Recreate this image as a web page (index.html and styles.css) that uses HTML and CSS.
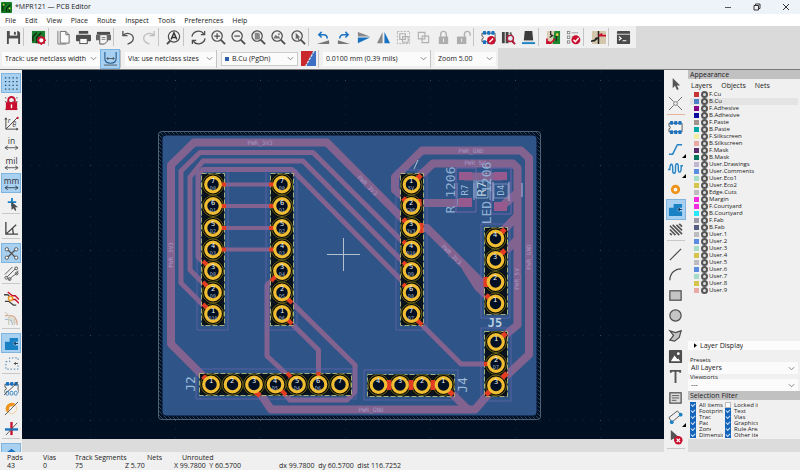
FILE: index.html
```html
<!DOCTYPE html>
<html lang="en">
<head>
<meta charset="utf-8">
<title>*MPR121 — PCB Editor</title>
<link rel="stylesheet" href="styles.css">
</head>
<body>
<svg class="defs" aria-hidden="true">
  <defs>
    <symbol id="i-lens" viewBox="0 0 16 16"><circle cx="6.5" cy="6.5" r="5.5" fill="none" stroke="#4d4d4d" stroke-width="1.3"/><path d="M10.5 10.5l4.5 4.5" stroke="#4d4d4d" stroke-width="2"/></symbol>
    <symbol id="i-rats" viewBox="0 0 16 16"><g fill="none" stroke="#545454"><path d="M4 4l8 8M12 4l-8 8" stroke-width="1.4"/><g fill="#eef5fb"><circle cx="3" cy="3.500" r="1.800"/><circle cx="13" cy="3.500" r="1.800"/><circle cx="3" cy="12.500" r="1.800"/><circle cx="13" cy="12.500" r="1.800"/></g></g></symbol>
    <symbol id="i-foot" viewBox="0 0 16 16"><path d="M1 3.500h14v9H1v-3a1.500 1.500 0 0 0 0-3z" fill="#f4f4f4" stroke="#545454"/><g fill="#1a73c1"><rect x="2" y="1" width="3.500" height="4" rx="1"/><rect x="6.500" y="1" width="3.500" height="4" rx="1"/><rect x="11" y="1" width="3.500" height="4" rx="1"/><rect x="2" y="11" width="3.500" height="4" rx="1"/><rect x="6.500" y="11" width="3.500" height="4" rx="1"/><rect x="11" y="11" width="3.500" height="4" rx="1"/></g></symbol>
    <symbol id="i-zone" viewBox="0 0 16 16"><path d="M1 6h5V2h9v4h-3a2 2 0 0 0 0 4h3v5H1z" fill="#1a81c4"/><path d="M15 8h-4M12.500 6.500L11 8l1.500 1.500" fill="none" stroke="#123d66" stroke-width="1.3"/></symbol>
    <symbol id="chev" viewBox="0 0 8 8"><path d="M1 2.500l3 3 3-3" fill="none" stroke="#777"/></symbol>
    <g id="ring"><circle r="7.300" fill="#000f24" stroke="#f0bd32" stroke-width="3.200"/></g>
    <g id="land"><rect x="-11" y="-11" width="22" height="22" rx="9" fill="#05080a"/><circle r="10.500" fill="none" stroke="#968b22" stroke-width=".7"/></g>
    <pattern id="grid" x="90" y="80" width="85" height="85" patternUnits="userSpaceOnUse">
      <path d="M0 .5h85" stroke="#14283d" stroke-dasharray="1 7.500"/><path d="M.5 0v85" stroke="#14283d" stroke-dasharray="1 7.500"/><rect width="1" height="1" fill="#3a4a5a"/>
    </pattern>
    <pattern id="hatch" width="4" height="4" patternUnits="userSpaceOnUse"><path d="M0 0l4 4M-1 3l2 2M3-1l2 2" stroke="#3a546c" stroke-width=".8"/></pattern>
  </defs>
</svg>

<header class="title">
  <svg class="logo" viewBox="0 0 12 12"><rect width="12" height="12" rx="1" fill="#137a21"/><path d="M2 10V5l3-3M6 11V7l4-4M9 11V8" fill="none" stroke="#0a2c0e" stroke-width="1.4"/><circle cx="3" cy="3" r="1" fill="#cfd45a"/><circle cx="9.500" cy="7" r="1" fill="#cfd45a"/></svg>
  <h1>*MPR121 — PCB Editor</h1>
  <div class="winbtns">
    <button aria-label="Minimize"><svg viewBox="0 0 8 8"><path d="M1 4.500h6" stroke="#555"/></svg></button>
    <button aria-label="Restore"><svg viewBox="0 0 8 8"><path d="M1 2.500h4.500V7H1zM2.500 2.500V1H7v4.500H5.500" fill="none" stroke="#333"/></svg></button>
    <button aria-label="Close"><svg viewBox="0 0 8 8"><path d="M1 1l6 6M7 1L1 7" stroke="#333"/></svg></button>
  </div>
</header>

<nav class="menu">
  <a href="#">File</a><a href="#">Edit</a><a href="#">View</a><a href="#">Place</a><a href="#">Route</a><a href="#">Inspect</a><a href="#">Tools</a><a href="#">Preferences</a><a href="#">Help</a>
</nav>

<div class="bars">
<div class="toolbar">
  <button aria-label="Save"><svg viewBox="0 0 16 16"><path d="M1 1h12l2 2v12H1z" fill="#4d4d4d"/><rect x="4" y="1" width="8" height="5" fill="#f0f0f0"/><rect x="8.500" y="2" width="2" height="3" fill="#4d4d4d"/><rect x="3" y="9" width="10" height="6" fill="#f0f0f0"/></svg></button><i></i>
  <button aria-label="Board setup"><svg viewBox="0 0 16 16"><rect x="1" y="1" width="14" height="13" fill="#1d7f30"/><path d="M2 12V7l4-4M6 14V8l5-5" fill="none" stroke="#0a3010" stroke-width="1.500"/><circle cx="11" cy="11" r="3.200" fill="#fff" stroke="#c8102e" stroke-width="1.800"/><path d="M11 6v2M11 14v2M6 11h2M14 11h2M7.500 7.500L9 9M13 13l1.500 1.500M14.500 7.500L13 9M9 13l-1.500 1.500" stroke="#c8102e" stroke-width="1.500"/></svg></button><i></i>
  <button aria-label="Page settings"><svg viewBox="0 0 16 16"><path d="M2 1v14h9" fill="none" stroke="#777"/><path d="M4.500 1.500h6L14 5v9H4.500zM10.500 1.500V5H14" fill="#fafafa" stroke="#666"/></svg></button>
  <button aria-label="Print"><svg viewBox="0 0 16 16"><rect x="3" y="1" width="10" height="3" fill="#4d4d4d"/><rect y="5" width="16" height="7" rx="1" fill="#4d4d4d"/><rect x="4" y="9" width="8" height="5.500" fill="#f8f8f8" stroke="#4d4d4d"/></svg></button>
  <button aria-label="Plot"><svg viewBox="0 0 16 16"><path d="M1 2h14v3H1z" fill="#4d4d4d"/><path d="M0 5h4v6H0zM12 5h4v6h-4z" fill="#666"/><path d="M4 5h8v7l-3 3H4z" fill="#f5f5f5" stroke="#4d4d4d"/><path d="M6 8h4M6 10h4" stroke="#777"/></svg></button><i></i>
  <button aria-label="Undo"><svg viewBox="0 0 16 16"><path d="M2 1v5h5M2 6c5-5 12-1 11 4-.5 3-3 4-6 5" fill="none" stroke="#545454" stroke-width="1.400"/></svg></button>
  <button aria-label="Redo"><svg viewBox="0 0 16 16"><path d="M14 1v5H9M14 6C9 1 2 5 3 10c.5 3 3 4 6 5" fill="none" stroke="#bdbdbd" stroke-width="1.400"/></svg></button><i></i>
  <button aria-label="Find"><svg viewBox="0 0 16 16"><circle cx="8.500" cy="7" r="6" fill="none" stroke="#4d4d4d" stroke-width="1.300"/><path d="M4.500 11.500L1 15" stroke="#4d4d4d" stroke-width="2"/><path d="M5.500 10L8.500 3l3 7M6.500 8h4" fill="none" stroke="#333" stroke-width="1.500"/></svg></button><i></i>
  <button aria-label="Refresh"><svg viewBox="0 0 16 16"><path d="M1 7c1-6 9-8 12.500-3M14.500 1v4h-4M15 9c-1 6-9 8-12.500 3M1.500 15v-4h4" fill="none" stroke="#4d4d4d" stroke-width="1.400"/></svg></button>
  <button aria-label="Zoom in"><svg viewBox="0 0 16 16"><use href="#i-lens"/><path d="M3.500 6.500h6M6.500 3.500v6" stroke="#4d4d4d" stroke-width="1.300"/></svg></button>
  <button aria-label="Zoom out"><svg viewBox="0 0 16 16"><use href="#i-lens"/><path d="M3.500 6.500h6" stroke="#4d4d4d" stroke-width="1.300"/></svg></button>
  <button aria-label="Zoom to fit"><svg viewBox="0 0 16 16"><use href="#i-lens"/><path d="M4 3h4l1.500 1.500V10H4z" fill="#888"/></svg></button>
  <button aria-label="Zoom to objects"><svg viewBox="0 0 16 16"><use href="#i-lens"/><path d="M3 8l2-3 2 2 1-1 2 3H3z" fill="#777"/><circle cx="8.500" cy="4.500" r="1" fill="#777"/></svg></button>
  <button aria-label="Zoom to selection"><svg viewBox="0 0 16 16"><use href="#i-lens"/><path d="M5 3v7l1.500-1.500L8 11l1-.5L8 8h2z" fill="#666"/></svg></button><i></i>
  <button aria-label="Rotate left"><svg viewBox="0 0 16 16"><path d="M1 15h13v-4z" fill="#777"/><path d="M3 5h5c3 0 4 2 4 4M6 2L3 5l3 3" fill="none" stroke="#1a73c1" stroke-width="1.600"/></svg></button>
  <button aria-label="Rotate right"><svg viewBox="0 0 16 16"><path d="M15 15H2v-4z" fill="#777"/><path d="M13 5H8C5 5 4 7 4 9M10 2l3 3-3 3" fill="none" stroke="#1a73c1" stroke-width="1.600"/></svg></button>
  <button aria-label="Mirror vertically"><svg viewBox="0 0 16 16"><path d="M2 2l13 5H2z" fill="#888"/><path d="M2 14l13-6H2z" fill="#1a73c1"/></svg></button>
  <button aria-label="Mirror horizontally"><svg viewBox="0 0 16 16"><path d="M7 2v12H1z" fill="#888"/><path d="M9 2v12h6z" fill="#1a73c1"/></svg></button>
  <button aria-label="Group"><svg viewBox="0 0 16 16"><rect x="1.500" y="1.500" width="13" height="13" fill="none" stroke="#aaa" stroke-dasharray="2 1.500"/><path d="M4 4h6v6H4zM7 7h6v6H7z" fill="#f0f0f0" stroke="#b0b0b0" stroke-width="1.200"/></svg></button>
  <button aria-label="Ungroup"><svg viewBox="0 0 16 16"><path d="M2.500 2.500h7v7h-7zM6.500 6.500h7v7h-7z" fill="#f0f0f0" stroke="#b0b0b0" stroke-width="1.200"/></svg></button>
  <button aria-label="Lock"><svg viewBox="0 0 16 16"><path d="M5 8V4.500a3 3 0 0 1 6 0V8" fill="none" stroke="#b2b2b2" stroke-width="1.500"/><rect x="3" y="7" width="10" height="8" fill="#adadad"/><rect x="7.500" y="9" width="1" height="4" fill="#eee"/></svg></button>
  <button aria-label="Unlock"><svg viewBox="0 0 16 16"><path d="M9 8V4.500a3 3 0 0 1 6 0V6" fill="none" stroke="#b2b2b2" stroke-width="1.500"/><rect x="1" y="7" width="10" height="8" fill="#adadad"/><rect x="5.500" y="9" width="1" height="4" fill="#eee"/></svg></button><i></i>
  <button aria-label="Footprint editor"><svg viewBox="0 0 16 16"><use href="#i-foot"/><circle cx="11" cy="11" r="4.500" fill="#c8102e"/><path d="M9 13l4-4" stroke="#fff" stroke-width="1.600"/></svg></button>
  <button aria-label="Footprint library"><svg viewBox="0 0 16 16"><path d="M1 2h3v12H1zM5 2h3v12H5z" fill="#444"/><path d="M9 3l2-1 3 11-2 1z" fill="#666"/><circle cx="10" cy="9" r="3.300" fill="#dce9f4" stroke="#b51a35" stroke-width="1.500"/><path d="M12 12l3 3" stroke="#b51a35" stroke-width="2"/></svg></button>
  <button aria-label="3D viewer"><svg viewBox="0 0 16 16"><path d="M4 1h8l1 10H3z" fill="#3b3b3b"/><path d="M3 11h10v1H3z" fill="#999"/><rect x="1" y="13" width="14" height="2" fill="#1a81c4"/></svg></button><i></i>
  <button aria-label="Update from schematic"><svg viewBox="0 0 16 16"><rect width="9" height="14" x="1" y="1" fill="#d9ceb4"/><path d="M9 1h6v14H7z" fill="#1d8a30"/><path d="M5 1v4l2 1-3 2M11 12V7l3-3" fill="none" stroke="#222" stroke-width="1.300"/><path d="M2 12c2 3 6 1 7-3M1 9v5h5" fill="none" stroke="#c8102e" stroke-width="1.800"/><circle cx="12" cy="5" r="1.500" fill="#e6d34a"/></svg></button>
  <button aria-label="Design rules check"><svg viewBox="0 0 16 16"><path d="M6 3h7M6 7h4" stroke="#999"/><g fill="#fff" stroke="#888"><rect x="1.500" y="1.500" width="2.500" height="2.500"/><rect x="1.500" y="6.500" width="2.500" height="2.500"/><rect x="1.500" y="11.500" width="2.500" height="2.500"/></g><circle cx="10.500" cy="10.500" r="4.800" fill="#c8102e"/><path d="M8 10.500l2 2 3.500-4" fill="none" stroke="#fff" stroke-width="1.500"/></svg></button><i></i>
  <button aria-label="Schematic editor"><svg viewBox="0 0 16 16"><rect x="1" y="1" width="15" height="14" rx="1" fill="#d3c6ab"/><path d="M8 1v14M0 12l4-1 2-3M3 12l5-4" fill="none" stroke="#222" stroke-width="1.600"/><path d="M8 6h8M8 6l4-2" stroke="#c8102e" stroke-width="1.700"/></svg></button><i></i>
  <button aria-label="Scripting console"><svg viewBox="0 0 16 16"><rect x="1" y="1" width="14" height="14" rx="1" fill="#4a4a4a"/><path d="M1 4.500h14" stroke="#ddd"/><path d="M3 7l2.500 2L3 11M7 11.500h4" fill="none" stroke="#fff" stroke-width="1.200"/></svg></button>
</div>
<div class="toolbar second">
  <label class="combo w-track"><select aria-label="Track width"><option>Track: use netclass width</option></select><svg><use href="#chev"/></svg></label>
  <button class="on" aria-label="Auto track width"><svg viewBox="0 0 16 16"><path d="M2 1v7c0 4 2 5 6 5s6-1 6-5V1" fill="none" stroke="#2a5d8f" stroke-width="1.200"/><path d="M1 15h14M4 8h8M5.500 6.500L4 8l1.500 1.500M10.500 6.500L12 8l-1.500 1.500" fill="none" stroke="#4d5a66"/></svg></button><i></i>
  <label class="combo w-via"><select aria-label="Via size"><option>Via: use netclass sizes</option></select><svg><use href="#chev"/></svg></label><i></i>
  <label class="combo framed w-layer"><b class="chip"></b><select aria-label="Active layer"><option>B.Cu (PgDn)</option></select><svg><use href="#chev"/></svg></label>
  <button aria-label="Layer pair"><svg viewBox="0 0 16 16"><path d="M0 0h16v16H0z" fill="#c9282d"/><path d="M13 0h3v16H5z" fill="#3d70c4"/><path d="M14 0L5 16" stroke="#ddd" stroke-width="1.500" stroke-dasharray="3 1"/></svg></button><i></i>
  <label class="combo w-grid"><select aria-label="Grid"><option>0.0100 mm (0.39 mils)</option></select><svg><use href="#chev"/></svg></label><i></i>
  <label class="combo w-zoom"><select aria-label="Zoom"><option>Zoom 5.00</option></select><svg><use href="#chev"/></svg></label>
</div>
</div>

<main class="work">
  <div class="side left">
    <button class="on" aria-label="Show grid"><svg viewBox="0 0 16 16"><path d="M1 2h16M1 6h16M1 10h16M1 14h16" stroke="#25506f" stroke-width="1.500" stroke-dasharray="1.500 2.500"/></svg></button>
    <button aria-label="Grid overrides"><svg viewBox="0 0 16 16"><path d="M1 2h16M1 6h16M1 14h16" stroke="#555" stroke-dasharray="1.500 2.500"/><path d="M4.500 7V4.500a3.500 3.500 0 0 1 7 0V7" fill="none" stroke="#c8102e" stroke-width="2"/><rect x="2" y="6.500" width="12" height="8.500" fill="#c8102e"/><path d="M8 9v4" stroke="#fff" stroke-width="1.500"/></svg></button>
    <button aria-label="Polar coordinates"><svg viewBox="0 0 16 16"><path d="M2 2v12h13M2 14L14 2M1 4l1-2 1 2M13 13l2 1-2 1" fill="none" stroke="#444"/><circle cx="14.500" cy="2" r="1.200" fill="#c8102e"/><text x="4" y="7" class="glyph it">r</text><text x="9" y="12" class="glyph it">θ</text></svg></button>
    <button aria-label="Inches"><svg viewBox="0 0 16 16"><text x="8" y="8" class="glyph unit">in</text><path d="M1 12.500h14M4 10.500l-3 2 3 2M12 10.500l3 2-3 2" fill="none" stroke="#545454"/></svg></button>
    <button aria-label="Mils"><svg viewBox="0 0 16 16"><text x="8" y="8" class="glyph unit">mil</text><path d="M1 12.500h14M4 10.500l-3 2 3 2M12 10.500l3 2-3 2" fill="none" stroke="#545454"/></svg></button>
    <button class="on" aria-label="Millimeters"><svg viewBox="0 0 16 16"><text x="8" y="8" class="glyph unit">mm</text><path d="M1 12.500h14M4 10.500l-3 2 3 2M12 10.500l3 2-3 2" fill="none" stroke="#345"/></svg></button>
    <button aria-label="Full crosshair"><svg viewBox="0 0 16 16"><path d="M8.500 2v9M4 6.500h9" stroke="#1a81c4" stroke-width="2"/><path d="M8 6v9l2-2 2 3 1-1-1-3h3z" fill="#4d4d4d"/></svg></button><i></i>
    <button aria-label="45 degree mode"><svg viewBox="0 0 16 16"><path d="M2 1v13h13M2 14L13 4M9 7l1 7" fill="none" stroke="#444" stroke-width="1.400"/></svg></button><i></i>
    <button class="on" aria-label="Ratsnest"><svg><use href="#i-rats"/></svg></button>
    <button aria-label="Curved ratsnest"><svg viewBox="0 0 16 16"><g fill="none" stroke="#555"><path d="M1 9L9 1M3 12L12 3M5 15l4-4c3-2 5-2 6-6"/><circle cx="2.500" cy="12.500" r="1.500"/><circle cx="13" cy="2.500" r="1.500"/><circle cx="6" cy="14" r="1.500"/><circle cx="13.500" cy="8" r="1.500"/></g></svg></button><i></i>
    <button aria-label="Net highlight"><svg viewBox="0 0 16 16"><path d="M0 4h4l5 5M1 11h4l5 4h3" fill="none" stroke="#444" stroke-width="1.400"/><path d="M4 1l5 4h3l4 4M9 9h3l4 4" fill="none" stroke="#c8102e" stroke-width="1.500"/><circle cx="7" cy="8" r="2.300" fill="#f7e9cf" stroke="#ee931c" stroke-width="1.500"/></svg></button>
    <button aria-label="Net colors"><svg viewBox="0 0 16 16"><g fill="none" stroke-width="1.300"><path d="M1 5h5c5 0 8 3 8 10" stroke="#d8a48a"/><path d="M1 9h3c3 0 5 2 5 6" stroke="#a9bdc9"/><path d="M1 1l13 13" stroke="#d5cec0"/><path d="M5 6v9M11 5v10" stroke="#ccb"/></g></svg></button><i></i>
    <button class="on" aria-label="Filled zones"><svg><use href="#i-zone"/></svg></button>
    <button aria-label="Zone outlines"><svg viewBox="0 0 16 16"><path d="M2 6h4V2h9v4M15 10v4H2V6" fill="none" stroke="#3374a8" stroke-dasharray="1.500 2"/><path d="M15 8h-4M12.500 6.500L11 8l1.500 1.500" fill="none" stroke="#444"/></svg></button><i></i>
    <button aria-label="Pad outlines"><svg viewBox="0 0 16 16"><use href="#i-foot"/><path d="M1 10h14v6H1z" fill="#f4f4f4"/><g fill="none" stroke="#3c86c0"><rect x="2" y="11" width="3" height="4" rx="1"/><rect x="6.500" y="11" width="3" height="4" rx="1"/><rect x="11" y="11" width="3" height="4" rx="1"/></g><path d="M0 15L15 1" stroke="#444"/></svg></button>
    <button aria-label="Via outlines"><svg viewBox="0 0 16 16"><circle cx="8" cy="8" r="5.500" fill="none" stroke="#f3cf94"/><path d="M12 3L3 12a6.500 6.500 0 0 1 9-9z" fill="#ee931c"/><circle cx="8" cy="8" r="2.500" fill="#f5f5f5"/><path d="M1 15L15 1" stroke="#555"/></svg></button>
    <button aria-label="Track outlines"><svg viewBox="0 0 16 16"><path d="M8 1v14" stroke="#c8102e" stroke-width="2.500"/><path d="M1 9h14" stroke="#1a73c1" stroke-width="2.500"/><path d="M2 15L14 2" stroke="#555"/></svg></button><i></i>
    <button class="on" aria-label="Layers manager"><svg viewBox="0 0 16 16"><path d="M8 3l8 6-8 6-8-6z" fill="#1a73c1"/></svg></button>
  </div>

  <div class="center">
    <svg class="canvas" viewBox="22 70 642 369" preserveAspectRatio="xMidYMid slice" role="img" aria-label="Circuit board layout">
      <rect x="22" y="70" width="642" height="369" fill="#000f22"/>
      <rect x="22" y="70" width="642" height="369" fill="url(#grid)"/>
      <rect x="158.500" y="131.500" width="382" height="288" rx="3" fill="url(#hatch)" stroke="#5f7789" stroke-width=".8"/>
      <rect x="162" y="135" width="375" height="281" rx="4" fill="#2f5487" stroke="#00122a"/>
      <g fill="none" stroke="#82628f" stroke-linejoin="round" stroke-linecap="round">
        <g stroke-width="8">
          <path d="M211 384L171 344V165l23-22.500h133L411 227"/>
          <path d="M254 384l17 25.500h204l21-24 33-31V158l-8-7.500h-99l-27 26.500v13l16 13h54M443 385l25 24.500"/>
          <path d="M411 184l22-20.500h80l4.500 4.500V325l-21 17M517 216l-21 22M517 240l-21 20M501 207l16-14M465 176.500h36M460 203h8"/>
          <path d="M411 228h16l54 54h14M466 268l12 19 17 16"/>
        </g>
        <g stroke-width="5">
          <path d="M212 314l-31-31V171l19-18.500h113L411 250M212 292l-22-22v-93l13-16h100l109 110M212 271l-14-14v-83l5-4.500h89L411 290"/>
          <path d="M282 271l-15 14v71l30 28M282 314l36.500 36v34M282 293l73 72v27l-8 8h-57l-14-16M411 314l50 50h35"/>
          <path d="M213 184.500h69M213 206h69M213 228h69M213 249.500h69" stroke-width="4"/>
        </g>
      </g>
      <g class="net">
        <text x="260" y="145">PWR_3V3</text><text x="471" y="153">PWR_GND</text><text x="475" y="165">PWR_5V</text><text x="371" y="412">PWR_GND</text>
        <text transform="translate(173 255) rotate(-90)">PWR_3V3</text><text transform="translate(531 257) rotate(-90)">PWR_GND</text><text transform="translate(519 279) rotate(-90)">PWR_5V</text>
        <text transform="translate(366 187) rotate(45)">PWR_3V3</text><text transform="translate(450 256) rotate(45)">PWR_3V3</text>
      </g>

      <g fill="none" stroke="#6d69ad" stroke-width=".7"><path d="M197 170h31v160h-31zM266 170h31v160h-31zM396 170h31v160h-31zM481 224h29v94h-29zM481 328h30v73h-30zM196 369h160v30H196zM364 370h94v30h-94z"/></g>
      <g fill="#0a1420" stroke="#c9ce83" stroke-width=".8" stroke-dasharray="5 2"><path d="M201.500 173.500h23v152h-23zM270.500 173.500h23v152h-23zM400.500 173.500h23v152h-23zM484.500 227.500h23v87h-23zM484.500 331.500h23v65h-23zM199.500 373.500h152v22h-152zM367.500 374.500h87v22h-87z"/></g>
      <g>
        <use href="#land" x="213" y="184.500"/><use href="#land" x="213" y="206"/><use href="#land" x="213" y="228"/><use href="#land" x="213" y="249.500"/><use href="#land" x="213" y="271"/><use href="#land" x="213" y="292.500"/><use href="#land" x="213" y="314"/>
        <use href="#land" x="282" y="184.500"/><use href="#land" x="282" y="206"/><use href="#land" x="282" y="228"/><use href="#land" x="282" y="249.500"/><use href="#land" x="282" y="271"/><use href="#land" x="282" y="292.500"/><use href="#land" x="282" y="314"/>
        <use href="#land" x="411.500" y="184.500"/><use href="#land" x="411.500" y="206"/><use href="#land" x="411.500" y="228"/><use href="#land" x="411.500" y="249.500"/><use href="#land" x="411.500" y="271"/><use href="#land" x="411.500" y="292.500"/><use href="#land" x="411.500" y="314"/>
        <use href="#land" x="495.500" y="238.500"/><use href="#land" x="495.500" y="260"/><use href="#land" x="495.500" y="282"/><use href="#land" x="495.500" y="303.500"/>
        <use href="#land" x="496" y="342"/><use href="#land" x="496" y="364"/><use href="#land" x="496" y="385.500"/>
        <use href="#land" x="211" y="384.500"/><use href="#land" x="232.500" y="384.500"/><use href="#land" x="254" y="384.500"/><use href="#land" x="275.500" y="384.500"/><use href="#land" x="297" y="384.500"/><use href="#land" x="318.500" y="384.500"/><use href="#land" x="340" y="384.500"/>
        <use href="#land" x="378.500" y="385"/><use href="#land" x="400" y="385"/><use href="#land" x="422" y="385"/><use href="#land" x="443.500" y="385"/>
      </g>
      <g stroke="#e23c22" stroke-width="4" fill="none">
        <path d="M220 184.500h6M220 206h6M220 228h6M220 249.500h6M269 184.500h6M269 206h6M269 228h6M269 249.500h6M203 261l5 5M203 282l5 5M203 304l5 5M271 281l5-5M287 298l5 5M287 319l5 5M403 241l5 5M403 262l5 5M403 284l5 5M417 320l5 5M484 364h6M291 377l-4-4M318.500 377v-5M281 390l5 5"/>
        <path d="M417 179l4-4M403 198l4 4M419 206v-7M403 219l4 4M421 223v10M501 233l4-4M501 254l4-4M486 277v10M486 295l4 4M502 337l4-4M502 378l5-5M490 391l-4 4M203 376l4 4M255 391l5 5M449 391l4 4M389 380v10M411 380v10M433 380v10" stroke-width="5"/>
      </g>
      <g>
        <use href="#ring" x="213" y="184.500"/><use href="#ring" x="213" y="206"/><use href="#ring" x="213" y="228"/><use href="#ring" x="213" y="249.500"/><use href="#ring" x="213" y="271"/><use href="#ring" x="213" y="292.500"/><use href="#ring" x="213" y="314"/>
        <use href="#ring" x="282" y="184.500"/><use href="#ring" x="282" y="206"/><use href="#ring" x="282" y="228"/><use href="#ring" x="282" y="249.500"/><use href="#ring" x="282" y="271"/><use href="#ring" x="282" y="292.500"/><use href="#ring" x="282" y="314"/>
        <use href="#ring" x="411.500" y="184.500"/><use href="#ring" x="411.500" y="206"/><use href="#ring" x="411.500" y="228"/><use href="#ring" x="411.500" y="249.500"/><use href="#ring" x="411.500" y="271"/><use href="#ring" x="411.500" y="292.500"/><use href="#ring" x="411.500" y="314"/>
        <use href="#ring" x="495.500" y="238.500"/><use href="#ring" x="495.500" y="260"/><use href="#ring" x="495.500" y="282"/><use href="#ring" x="495.500" y="303.500"/>
        <use href="#ring" x="496" y="342"/><use href="#ring" x="496" y="364"/><use href="#ring" x="496" y="385.500"/>
        <use href="#ring" x="211" y="384.500"/><use href="#ring" x="232.500" y="384.500"/><use href="#ring" x="254" y="384.500"/><use href="#ring" x="275.500" y="384.500"/><use href="#ring" x="297" y="384.500"/><use href="#ring" x="318.500" y="384.500"/><use href="#ring" x="340" y="384.500"/>
        <use href="#ring" x="378.500" y="385"/><use href="#ring" x="400" y="385"/><use href="#ring" x="422" y="385"/><use href="#ring" x="443.500" y="385"/>
      </g>
      <g class="num" transform="translate(0 -2)">
        <text x="213" y="185">7</text><text x="213" y="207">6</text><text x="213" y="228">5</text><text x="213" y="250">4</text><text x="213" y="271">3</text><text x="213" y="293">2</text><text x="213" y="315">1</text>
        <text x="282" y="185">7</text><text x="282" y="207">6</text><text x="282" y="228">5</text><text x="282" y="250">4</text><text x="282" y="271">3</text><text x="282" y="293">2</text><text x="282" y="315">1</text>
        <text x="411" y="185">1</text><text x="411" y="207">2</text><text x="411" y="228">3</text><text x="411" y="250">4</text><text x="411" y="271">5</text><text x="411" y="293">6</text><text x="411" y="315">7</text>
        <text x="495" y="239">4</text><text x="495" y="261">3</text><text x="495" y="282">2</text><text x="495" y="304">1</text><text x="496" y="343">1</text><text x="496" y="364">2</text><text x="496" y="386">3</text>
        <text x="211" y="385">1</text><text x="232" y="385">2</text><text x="254" y="385">3</text><text x="275" y="385">4</text><text x="297" y="385">5</text><text x="318" y="385">6</text><text x="340" y="385">7</text>
        <text x="378" y="385">4</text><text x="400" y="385">3</text><text x="422" y="385">2</text><text x="443" y="385">1</text>
      </g>
      <g class="pin">
        <text x="213" y="190">D0</text><text x="213" y="212">D1</text><text x="213" y="233">D2</text><text x="213" y="255">D3</text><text x="213" y="276">D8</text><text x="213" y="298">D9</text><text x="213" y="320">D10</text>
        <text x="282" y="190">D0</text><text x="282" y="212">D1</text><text x="282" y="233">D2</text><text x="282" y="255">D3</text><text x="282" y="276">D4</text><text x="282" y="298">D5</text><text x="282" y="320">D6</text>
        <text x="411" y="190">5V</text><text x="411" y="212">GND</text><text x="411" y="233">3V3</text><text x="411" y="255">D10</text><text x="411" y="276">D9</text><text x="411" y="298">D8</text><text x="411" y="320">D7</text>
        <text x="496" y="369">D7</text><text x="275" y="390">D5</text><text x="297" y="390">D4</text><text x="318" y="390">D6</text>
      </g>

      <g fill="#965a8e"><rect x="459" y="172" width="13" height="8"/><rect x="459" y="198" width="13" height="9"/><rect x="494" y="172" width="13" height="8"/><rect x="494" y="202" width="13" height="9"/></g>
      <g fill="none" stroke="#8d9bc9" stroke-width=".8"><path d="M457 183v15M474 183v15M494 184h14v14h-14z"/><path d="M493 182v19M509 182v19M522 183v14" stroke-width="1.200" stroke="#a9a8cf"/><path d="M456 168h20v44h-20zM491 168h20v46h-20z" stroke="#8169b8"/><path d="M474 180v20M490 180v20M476 181v17h12v-17z" stroke="#9fc0dc"/></g>
      <path d="M418 160l-4 9" stroke="#b5c6d6"/>
      <g class="ref">
        <text class="big" transform="translate(455 190) rotate(-90)">R_1206</text><text class="big" transform="translate(491 193) rotate(-90)">LED_1206</text>
        <text transform="translate(468 190) rotate(-90)">R7</text><text class="mid" transform="translate(486 189) rotate(-90)">R7</text><text transform="translate(504 190) rotate(-90)">D4</text>
        <text class="des" transform="translate(195 384) rotate(-90)">J2</text><text class="des" transform="translate(467 385) rotate(-90)">J4</text><text class="bold" x="495" y="327">J5</text>
      </g>
      <path d="M343.500 238v33M327 254.500h33" stroke="#b4c0cf"/>
    </svg>
  </div>

  <div class="side right">
    <button aria-label="Select"><svg viewBox="0 0 16 16"><path d="M5 2v11l2.500-2.500L9.500 15l2-1-2-4H13z" fill="#545454"/></svg></button>
    <button aria-label="Local ratsnest"><svg viewBox="0 0 16 16"><path d="M1 1l5 5M15 1l-5 5M1 15l5-5M15 15l-5-5" stroke="#666"/><circle cx="8" cy="8" r="2" fill="none" stroke="#777"/></svg></button><i class="warm"></i>
    <button aria-label="Place footprint"><svg><use href="#i-foot"/></svg></button>
    <button class="more" aria-label="Route tracks"><svg viewBox="0 0 16 16"><path d="M1 14h4l5-10h5" fill="none" stroke="#2785c7" stroke-width="1.600"/></svg></button>
    <button class="more" aria-label="Tune length"><svg viewBox="0 0 16 16"><path d="M0 9h2c0-7 3-7 3-2v3c0 4 3 4 3 0V6c0-4 3-4 3 0v3c0 4 3 4 3-1V5h2" fill="none" stroke="#2785c7" stroke-width="1.500"/></svg></button>
    <button aria-label="Place via"><svg viewBox="0 0 16 16"><circle cx="8" cy="8" r="3.500" fill="#f6f6f6" stroke="#ee931c" stroke-width="3"/></svg></button>
    <button class="on" aria-label="Draw zone"><svg><use href="#i-zone"/></svg></button>
    <button aria-label="Rule area"><svg viewBox="0 0 16 16"><path d="M2 4l10 10M2 8l6 6M2 12l2 2M5 3l10 10M9 3l6 6M12 2l3 3" stroke="#545454" stroke-width="1.700"/></svg></button><i></i>
    <button aria-label="Line"><svg viewBox="0 0 16 16"><path d="M2 14L14 2" stroke="#4d4d4d" stroke-width="1.300"/></svg></button>
    <button aria-label="Arc"><svg viewBox="0 0 16 16"><path d="M2 14C2 7 7 2 14 2" fill="none" stroke="#4d4d4d" stroke-width="1.300"/></svg></button>
    <button aria-label="Rectangle"><svg viewBox="0 0 16 16"><rect x="2" y="3" width="12" height="10" fill="#c4c4c4" stroke="#4d4d4d" stroke-width="1.300"/></svg></button>
    <button aria-label="Circle"><svg viewBox="0 0 16 16"><circle cx="8" cy="8" r="6" fill="#c4c4c4" stroke="#4d4d4d" stroke-width="1.300"/></svg></button>
    <button aria-label="Polygon"><svg viewBox="0 0 16 16"><path d="M2 3l6 2 6-2-2 7-5 4-5-1 4-5z" fill="#c4c4c4" stroke="#4d4d4d" stroke-width="1.300"/></svg></button>
    <button aria-label="Image"><svg viewBox="0 0 16 16"><rect x="1" y="1" width="14" height="14" rx="1" fill="#4d4d4d"/><path d="M3 13l4-6 3 4 1-1 2 3z" fill="#fff"/><circle cx="11" cy="5" r="1.500" fill="#fff"/></svg></button>
    <button aria-label="Text"><svg viewBox="0 0 16 16"><path d="M3 4V2h10v2M8 2v13" fill="none" stroke="#545454" stroke-width="2"/></svg></button>
    <button aria-label="Text box"><svg viewBox="0 0 16 16"><rect x="2" y="3" width="12" height="11" fill="#ddd" stroke="#4d4d4d" stroke-width="1.300"/><path d="M4 6h8M4 8.500h8M4 11h5" stroke="#555"/></svg></button>
    <button class="more" aria-label="Dimension"><svg viewBox="0 0 16 16"><path d="M1 8l9-7M4 13l9.500-8M1 8l3 5M10 1l3.500 4" fill="none" stroke="#555"/><circle cx="4" cy="13" r="2" fill="#1a81c4"/><circle cx="13.500" cy="5" r="2" fill="#1a81c4"/></svg></button>
    <button aria-label="Delete"><svg viewBox="0 0 16 16"><path d="M3 0v11l3-2 2 4 2-1-2-4h4z" fill="#545454"/><circle cx="11" cy="11" r="4.500" fill="#c8102e"/><path d="M9.200 9.200l3.600 3.600M12.800 9.200l-3.600 3.600" stroke="#fff" stroke-width="1.300"/></svg></button><i></i>
  </div>

  <aside class="panel">
    <h2>Appearance</h2>
    <div class="tabs"><button class="cur">Layers</button><button>Objects</button><button>Nets</button></div>
    <ul class="layers">
      <li><b class="c-red"></b><u></u><span>F.Cu</span></li>
      <li class="cur"><b class="c-blue"></b><u></u><span>B.Cu</span></li>
      <li><b class="c-purple"></b><u></u><span>F.Adhesive</span></li>
      <li><b class="c-navy"></b><u></u><span>B.Adhesive</span></li>
      <li><b class="c-gray"></b><u></u><span>F.Paste</span></li>
      <li><b class="c-teal"></b><u></u><span>B.Paste</span></li>
      <li><b class="c-cream"></b><u></u><span>F.Silkscreen</span></li>
      <li><b class="c-pink"></b><u></u><span>B.Silkscreen</span></li>
      <li><b class="c-plum"></b><u></u><span>F.Mask</span></li>
      <li><b class="c-green"></b><u></u><span>B.Mask</span></li>
      <li><b class="c-lilac"></b><u></u><span>User.Drawings</span></li>
      <li><b class="c-sky"></b><u></u><span>User.Comments</span></li>
      <li><b class="c-mint"></b><u></u><span>User.Eco1</span></li>
      <li><b class="c-gold"></b><u></u><span>User.Eco2</span></li>
      <li><b class="c-silver"></b><u></u><span>Edge.Cuts</span></li>
      <li><b class="c-magenta"></b><u></u><span>Margin</span></li>
      <li><b class="c-magenta"></b><u></u><span>F.Courtyard</span></li>
      <li><b class="c-cyan"></b><u></u><span>B.Courtyard</span></li>
      <li><b class="c-steel"></b><u></u><span>F.Fab</span></li>
      <li><b class="c-slate"></b><u></u><span>B.Fab</span></li>
      <li><b class="c-silver"></b><u></u><span>User.1</span></li>
      <li><b class="c-sky"></b><u></u><span>User.2</span></li>
      <li><b class="c-mint"></b><u></u><span>User.3</span></li>
      <li><b class="c-gold"></b><u></u><span>User.4</span></li>
      <li><b class="c-silver"></b><u></u><span>User.5</span></li>
      <li><b class="c-sky"></b><u></u><span>User.6</span></li>
      <li><b class="c-mint"></b><u></u><span>User.7</span></li>
      <li><b class="c-gold"></b><u></u><span>User.8</span></li>
      <li><b class="c-pink"></b><u></u><span>User.9</span></li>
    </ul>
    <button class="expander"><svg viewBox="0 0 4 6"><path d="M0 0l4 3-4 3z"/></svg><span>Layer Display Options</span></button>
    <label class="cap" for="presets">Presets</label>
    <div class="combo"><select id="presets"><option>All Layers</option></select><svg><use href="#chev"/></svg></div>
    <label class="cap" for="views">Viewports</label>
    <div class="combo"><select id="views"><option>---</option></select><svg><use href="#chev"/></svg></div>
    <h2>Selection Filter</h2>
    <div class="filter">
      <label><input type="checkbox" checked><span>All items</span></label><label><input type="checkbox"><span>Locked items</span></label>
      <label><input type="checkbox" checked><span>Footprints</span></label><label><input type="checkbox" checked><span class="sm">Text</span></label>
      <label><input type="checkbox" checked><span class="sm">Tracks</span></label><label><input type="checkbox" checked><span class="sm">Vias</span></label>
      <label><input type="checkbox" checked><span class="xs">Pads</span></label><label><input type="checkbox" checked><span>Graphics</span></label>
      <label><input type="checkbox" checked><span class="sm">Zones</span></label><label><input type="checkbox" checked><span>Rule Areas</span></label>
      <label><input type="checkbox" checked><span>Dimensions</span></label><label><input type="checkbox" checked><span>Other items</span></label>
    </div>
  </aside>
</main>

<footer class="status">
  <div class="heads"><span>Pads</span><span>Vias</span><span>Track Segments</span><span>Nets</span><span>Unrouted</span></div>
  <div class="vals"><span>43</span><span>0</span><span>75</span><span>Z 5.70</span><span>X 99.7800&nbsp; Y 60.5700</span><span>dx 99.7800&nbsp; dy 60.5700&nbsp; dist 116.7252</span></div>
</footer>
</body>
</html>
```
FILE: styles.css
```css
* { box-sizing: border-box; }
html { height: 100%; }
body {
  margin: 0;
  height: 100%;
  display: flex;
  flex-direction: column;
  overflow: hidden;
  background: #f0f0f0;
  color: #222;
  font: 7px/10px "Open Sans", "Noto Sans", sans-serif;
}
button, select, input { font: inherit; color: inherit; margin: 0; padding: 0; border: 0; background: none; }
h1, h2 { margin: 0; font-size: inherit; font-weight: 400; }
.defs { position: absolute; width: 0; height: 0; }

.title { display: flex; align-items: center; flex: 0 0 14px; background: #eef2f9; }
.logo { width: 11px; height: 11px; margin: 0 3px 0 1px; }
.winbtns { margin-left: auto; display: flex; }
.winbtns button { width: 29px; height: 14px; display: grid; place-items: center; }
.winbtns svg { width: 8px; height: 8px; }

.menu { display: flex; align-items: center; flex: 0 0 12px; gap: 9px; padding: 1px 5px 0; background: #fff; }
.menu a { color: inherit; text-decoration: none; }

.bars { background: #dadada; border-bottom: 1px solid #777; flex: 0 0 44px; }
.toolbar { display: flex; align-items: center; width: max-content; height: 22px; padding: 0 3px; background: #f0f0f0; }
.toolbar > button, .side > button { display: grid; place-items: center; width: 20px; height: 20px; flex: none; }
.toolbar svg, .side svg { width: 15px; height: 15px; }
.toolbar > i { width: 5px; height: 18px; flex: none; border-left: 1px solid #c4c4c4; }
.second { height: 21px; padding: 0 2px; }
.toolbar > .on, .side > .on { background: #a8d0f0; border: 1px solid #7fb4df; }

.combo { display: flex; align-items: center; height: 14px; background: #fbfbfb; padding: 0 3px; min-width: 0; }
.combo select { appearance: none; flex: 1; min-width: 0; height: 12px; line-height: 12px; }
.toolbar .combo svg, .combo svg { width: 7px; height: 7px; flex: none; pointer-events: none; }
.framed { border: 1px solid #ccc; }
.chip { width: 4px; height: 4px; margin-right: 3px; background: #2c5fa3; }
.w-track { width: 98px; }
.w-via { width: 91px; }
.w-layer { width: 77px; }
.w-grid { width: 107px; }
.w-zoom { width: 61px; }

.work { display: flex; flex: 1 1 0; min-height: 0; overflow: hidden; background: #dcdcdc; }
.side { display: flex; flex-direction: column; align-items: center; background: #f0f0f0; overflow: hidden; padding-top: 3px; }
.side > i { flex: 0 0 5px; width: 18px; border-top: 1px solid #c8c8c8; }
.left { flex: 0 0 22px; }
.right { flex: 0 0 24px; padding-right: 1px; }
.side.right > button { flex: 1 1 20px; height: auto; min-height: 0; }
.side.right > i { flex: 0 0 4px; }
.side.right > .warm { border-color: #e8b79a; }
.more { position: relative; }
.more::after { content: ""; position: absolute; right: 0; bottom: 1px; border: 2px solid #000; border-top-color: transparent; border-left-color: transparent; }
.glyph { font: 7px "Open Sans", sans-serif; fill: #333; }
.it { font-style: italic; }
.unit { font-size: 9px; text-anchor: middle; }

.center { flex: 1; min-width: 0; padding-bottom: 13px; display: flex; }
.canvas { display: block; width: 100%; height: 100%; }
.canvas text { font-family: "DejaVu Sans Mono", monospace; text-anchor: middle; }
.canvas .net text { font-size: 6px; fill: #a497c4; }
.canvas .num text { font-size: 7px; fill: #eef2f5; }
.canvas .pin text { font-size: 5px; fill: #a9b6c6; }
.canvas .ref text { font-size: 9px; fill: #9cbbd9; }
.canvas .ref .big { font-size: 13px; fill: #8fafd3; }
.canvas .ref .mid { font-size: 13px; fill: #b9cfdf; }
.canvas .ref .des { font-size: 13px; }
.canvas .ref .bold { font-size: 12px; font-weight: 700; fill: #b7cde0; }

.panel { flex: 0 0 112px; display: flex; flex-direction: column; background: #f0f0f0; margin-bottom: 13px; min-height: 0; }
.panel h2 { flex: 0 0 9px; line-height: 9px; padding-left: 2px; background: #c1c1c1; }
.tabs { display: flex; gap: 9px; flex: 0 0 12px; padding: 2px 3px 0; align-items: center; }
.tabs button { height: 10px; line-height: 10px; }
.layers { list-style: none; margin: 0; padding: 0 2px; }
.layers li { display: flex; align-items: center; height: 7px; padding-left: 4px; }
.layers .cur { background: #e4e4e4; }
.layers b { width: 5px; height: 5px; margin-right: 2px; }
.layers u { width: 7px; height: 7px; border: 2px solid #555; border-radius: 50%; margin-right: 1px; background: #ddd; }
.layers span { font-size: 6px; line-height: 7px; }
.c-red { background: #c83434; }
.c-blue { background: #4d7fc4; }
.c-purple { background: #840084; }
.c-navy { background: #0a0a9c; }
.c-gray { background: #a0938f; }
.c-teal { background: #00a8a8; }
.c-cream { background: #f2eda1; }
.c-pink { background: #e8a8a4; }
.c-plum { background: #5b2c6b; }
.c-green { background: #02735c; }
.c-lilac { background: #c2b6d0; }
.c-sky { background: #5a8de0; }
.c-mint { background: #a4dcc8; }
.c-gold { background: #d4c44c; }
.c-silver { background: #bcbcc0; }
.c-magenta { background: #f22be0; }
.c-cyan { background: #26e9ff; }
.c-steel { background: #9a9aa8; }
.c-slate { background: #585d84; }
.expander { display: flex; align-items: center; gap: 3px; margin-top: auto; padding-left: 6px; height: 9px; line-height: 9px; background: #fcfcfc; flex: none; }
.expander svg { width: 3px; height: 5px; }
.expander span { width: 43px; overflow: hidden; white-space: nowrap; text-align: left; }
.cap { height: 5px; line-height: 6px; padding-left: 2px; flex: none; font-size: 6px; }
.expander + .cap { margin-top: 7px; }
.panel .combo { height: 12px; flex: none; margin-right: 2px; }
.filter { display: grid; grid-template-columns: 35px 1fr; grid-auto-rows: 6px; padding: 2px 0 1px 2px; flex: none; }
.filter label { display: flex; align-items: center; gap: 3px; height: 6px; }
.filter input { appearance: none; width: 6px; height: 6px; flex: none; background: #fff; border: 1px solid #bbb; }
.filter input:checked { background: #1464bc; border-color: #1464bc; }
.filter input:checked::after { content: ""; display: block; width: 3px; height: 2px; border: solid #cfe2f5; border-width: 0 0 1px 1px; transform: rotate(-45deg); }
.filter span { width: 24px; height: 6px; font-size: 6px; line-height: 6px; overflow: hidden; white-space: nowrap; }
.filter .sm { width: 12px; }
.filter .xs { width: 9px; }

.status { flex: 0 0 18px; overflow: hidden; padding-left: 7px; white-space: nowrap; }
.heads, .vals { display: grid; height: 9px; line-height: 12px; }
.heads { grid-template-columns: 36px 32px 72px 35px 1fr; }
.vals { grid-template-columns: 36px 32px 50px 49px 105px 1fr; line-height: 10px; }
```
